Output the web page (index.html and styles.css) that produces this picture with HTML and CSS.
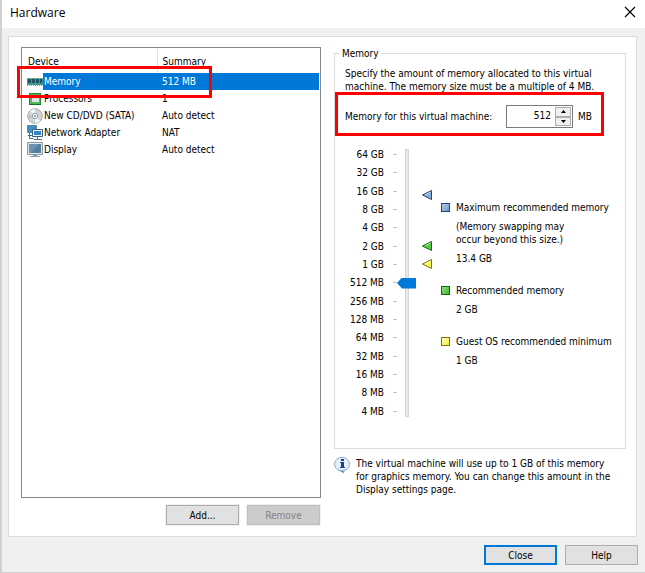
FILE: index.html
```html
<!DOCTYPE html>
<html lang="en">
<head>
<meta charset="utf-8">
<title>Hardware</title>
<link rel="stylesheet" href="styles.css">
</head>
<body>
<div class="window">
  <header class="titlebar">
    <h1>Hardware</h1>
    <button class="close-x" type="button" aria-label="Close window">
      <svg width="12" height="12" viewBox="0 0 12 12"><path d="M1 1l10 10M11 1L1 11" stroke="#000" stroke-width="1.2" fill="none"/></svg>
    </button>
  </header>

  <main class="panel">
    <section class="devices">
      <div class="list">
        <table>
          <thead><tr><th>Device</th><th>Summary</th></tr></thead>
          <tbody>
            <tr class="selected">
              <td><span class="device"><svg width="16" height="16" viewBox="0 0 16 16"><path d="M0 4h16v7H0z" fill="#3c9a94"/><path d="M1 5h3v4H1zM5 5h3v4H5zM9 5h3v4H9zM13 5h2v4h-2z" fill="#1f5563"/><path d="M0 11.500h16" stroke="#5cae93" stroke-dasharray="1 1"/><path d="M0 4.500h16" stroke="#67aaa2"/></svg><span class="name">Memory</span></span></td>
              <td class="value">512 MB</td>
            </tr>
            <tr>
              <td><span class="device"><svg width="16" height="16" viewBox="0 0 16 16"><path d="M2 2h12v12H2z" fill="#1f8f35"/><path d="M3 3h10v10H3z" fill="#4fb758"/><path d="M5 4h7v7H5z" fill="#e5e2e4"/><path d="M2 13.500h12" stroke="#12702b"/></svg><span class="name">Processors</span></span></td>
              <td class="value">1</td>
            </tr>
            <tr>
              <td><span class="device"><svg width="16" height="16" viewBox="0 0 16 16"><circle cx="8" cy="8" r="7.3" fill="#d2d5d9" stroke="#a5a9af"/><path d="M8 8L3 3a7 7 0 0 1 5-2zM8 8l5 5a7 7 0 0 1-5 2z" fill="#f5f6f7"/><path d="M8 8L1 7a7 7 0 0 0 1 4z" fill="#bfc4ca"/><circle cx="8" cy="8" r="2.7" fill="#f5f5f5" stroke="#999fa7"/><circle cx="8" cy="8" r="1" fill="#858b94"/></svg><span class="name">New CD/DVD (SATA)</span></span></td>
              <td class="value">Auto detect</td>
            </tr>
            <tr>
              <td><span class="device"><svg width="16" height="16" viewBox="0 0 16 16"><path d="M.5.500h9v7h-9z" fill="#3d8fc0" stroke="#5d87a5"/><path d="M2.500 8v5.500h4M1 10.500h4" fill="none" stroke="#2d6f9c"/><path d="M5.500 4.500h10v7h-10z" fill="#e6f2f9" stroke="#3b5f7c"/><path d="M7 6h7v4H7z" fill="#2f86c4"/><path d="M10.500 12v2M7 14.500h8" stroke="#4d7089"/></svg><span class="name">Network Adapter</span></span></td>
              <td class="value">NAT</td>
            </tr>
            <tr>
              <td><span class="device"><svg width="16" height="16" viewBox="0 0 16 16"><path d="M.5.5h15v12H.5z" fill="#dce6ec" stroke="#8798a5"/><path d="M2 2h12v9H2z" fill="#557f9f"/><path d="M2 2h10L4 11H2z" fill="#6c93b0"/><path d="M6 13h4v1h3v1H3v-1h3z" fill="#8d9ba5"/></svg><span class="name">Display</span></span></td>
              <td class="value">Auto detect</td>
            </tr>
          </tbody>
        </table>
        <span class="highlight highlight-device"></span>
      </div>
      <div class="list-actions">
        <button class="btn" type="button">Add...</button>
        <button class="btn" type="button" disabled>Remove</button>
      </div>
    </section>

    <section class="settings">
      <fieldset>
        <legend>Memory</legend>
        <p class="intro">Specify the amount of memory allocated to this virtual<br>machine. The memory size must be a multiple of 4 MB.</p>
        <div class="amount">
          <label for="memory">Memory for this virtual machine:</label>
          <span class="spinner">
            <input id="memory" type="text" value="512">
            <span class="steps">
              <button type="button" aria-label="Increase"><svg width="5" height="3" viewBox="0 0 5 3"><path d="M0 3L2.500 0 5 3z"/></svg></button>
              <button type="button" aria-label="Decrease"><svg width="5" height="3" viewBox="0 0 5 3"><path d="M0 0L2.500 3 5 0z"/></svg></button>
            </span>
          </span>
          <span>MB</span>
          <span class="highlight highlight-amount"></span>
        </div>
        <div class="allocation">
          <ol class="scale">
            <li>64 GB</li><li>32 GB</li><li>16 GB</li><li>8 GB</li><li>4 GB</li><li>2 GB</li><li>1 GB</li><li>512 MB</li><li>256 MB</li><li>128 MB</li><li>64 MB</li><li>32 MB</li><li>16 MB</li><li>8 MB</li><li>4 MB</li>
          </ol>
          <input class="slider" type="range" min="0" max="14" value="7" aria-label="Memory size">
          <div class="markers">
            <svg class="marker marker-max" width="10" height="10" viewBox="0 0 10 10"><path d="M9.500.5v9L.5 5z" fill="#8bafdc" stroke="#234574"/><path d="M8.500 2L3 5" stroke="#c6daf2"/></svg>
            <svg class="marker marker-rec" width="10" height="10" viewBox="0 0 10 10"><path d="M9.500.5v9L.5 5z" fill="#57cb42" stroke="#116b16"/><path d="M8.500 2L3 5" stroke="#b0eda0"/></svg>
            <svg class="marker marker-min" width="10" height="10" viewBox="0 0 10 10"><path d="M9.500.5v9L.5 5z" fill="#fbf64c" stroke="#77740b"/><path d="M8.500 2L3 5" stroke="#ffffc0"/></svg>
          </div>
          <dl class="legend">
            <div>
              <dt class="max">Maximum recommended memory</dt>
              <dd>(Memory swapping may<br>occur beyond this size.)</dd>
              <dd>13.4 GB</dd>
            </div>
            <div>
              <dt class="rec">Recommended memory</dt>
              <dd>2 GB</dd>
            </div>
            <div>
              <dt class="min">Guest OS recommended minimum</dt>
              <dd>1 GB</dd>
            </div>
          </dl>
        </div>
      </fieldset>
      <div class="note">
        <svg width="16" height="17" viewBox="0 0 16 17"><path d="M8 .5c4.300 0 7.500 2.900 7.500 6.700 0 3.300-2.200 5.400-5 6.200L9.500 16 6 13.500C2.800 12.800.5 10.500.5 7.200.5 3.400 3.700.5 8 .5z" fill="#e4eff9" stroke="#8caecb"/><path d="M4 12.500c3 1.700 7 1.300 9.500-1L10 13.300 9.300 15.500z" fill="#5289bb"/><path d="M7 2h3v2H7zM6 5h4v5h1v1H6v-1h1V6H6z" fill="#15428b"/></svg>
        <p>The virtual machine will use up to 1 GB of this memory<br>for graphics memory. You can change this amount in the<br>Display settings page.</p>
      </div>
    </section>
  </main>

  <footer class="dialog-actions">
    <button class="btn default" type="button">Close</button>
    <button class="btn" type="button">Help</button>
  </footer>
</div>
</body>
</html>
```
FILE: styles.css
```css
*, ::before, ::after { box-sizing: border-box; }

body {
  margin: 0;
  color: #000;
  font: 10px/13px "DejaVu Sans Condensed", Tahoma, sans-serif;
}

h1, p, dl, dd, ol { margin: 0; padding: 0; }
button, input { font: inherit; color: inherit; }
svg { display: block; flex: none; }

.window {
  display: flex;
  flex-direction: column;
  min-height: 100vh;
  border-left: 2px solid #d0d0d0;
  border-bottom: 1px solid #d0d0d0;
  background: #f0f0f0;
}

.titlebar {
  display: flex;
  align-items: center;
  justify-content: space-between;
  height: 28px;
  padding: 0 8px;
  background: #fff;
}
.titlebar h1 { font: 12px/16px "Open Sans", sans-serif; padding-bottom: 3px; }
.close-x {
  padding: 1px;
  border: 0;
  background: none;
  margin-bottom: 4px;
}

.panel {
  flex: 1;
  display: grid;
  grid-template-columns: minmax(0, 300fr) minmax(0, 292fr);
  gap: 13px;
  margin: 8px 8px 0 6px;
  padding: 10px 10px 11px 12px;
  border: 1px solid #dcdcdc;
  background: #fff;
}

.devices { display: flex; flex-direction: column; }
.list {
  position: relative;
  flex: 1;
  padding: 1px;
  border: 1px solid #828790;
}
table { width: 100%; border-collapse: collapse; table-layout: fixed; }
th, td { padding: 0; text-align: left; font-weight: normal; white-space: nowrap; }
th { height: 24px; padding: 0 5px; }
th:first-child { width: 134px; border-right: 1px solid #e0e0e0; }
td { height: 17px; }
.device { display: flex; align-items: center; padding-left: 4px; }
.name { flex: 1; line-height: 17px; padding-left: 1px; }
.value { padding-left: 5px; }
.selected .name, .selected .value { background: #0078d7; color: #fff; }

.highlight {
  position: absolute;
  border: 3px solid #f00;
  pointer-events: none;
}
.highlight-device { left: -5px; top: 18px; width: 195px; height: 32px; }
.highlight-amount { left: -10px; right: 11px; top: -13px; bottom: -8px; }

.list-actions, .dialog-actions { display: flex; justify-content: flex-end; gap: 8px; }
.list-actions { padding: 7px 1px 0 0; }
.dialog-actions { padding: 8px 7px 7px; }
.btn {
  width: 73px;
  height: 20px;
  padding: 0;
  border: 1px solid #adadad;
  background: #e1e1e1;
}
.list-actions .btn { outline: 1px solid #f0f0f0; }
.btn:disabled { border-color: #bfbfbf; background: #ccc; color: #838383; }
.btn.default { border: 2px solid #0078d7; }

fieldset {
  min-width: 0;
  margin: 0;
  padding: 7px 10px 31px;
  border: 1px solid #dcdcdc;
}
legend { margin-left: -5px; padding: 0 2px; }
.intro { white-space: nowrap; }

.amount {
  position: relative;
  display: flex;
  align-items: center;
  gap: 5px;
  margin: 12px 0 21px;
  white-space: nowrap;
}
.amount label { flex: none; width: 156px; }
.spinner {
  display: flex;
  width: 67px;
  height: 23px;
  padding: 1px;
  border: 1px solid #7a7a7a;
}
.spinner input {
  flex: 1;
  min-width: 0;
  padding: 0 4px 3px;
  border: 0;
  outline: 0;
  background: none;
  text-align: right;
}
.steps { display: flex; flex-direction: column; width: 16px; }
.steps button {
  flex: 1;
  display: flex;
  align-items: center;
  justify-content: center;
  padding: 0;
  border: 1px solid #adadad;
  background: #f0f0f0;
}

.allocation { display: flex; height: 268px; }
.scale {
  display: flex;
  flex-direction: column;
  justify-content: space-between;
  flex: none;
  width: 52px;
  list-style: none;
}
.scale li {
  display: flex;
  align-items: center;
  justify-content: flex-end;
  gap: 9px;
  height: 11px;
  line-height: 11px;
  white-space: nowrap;
}
.scale li::after { content: ""; width: 4px; height: 1px; background: #c4c4c4; }

.slider {
  appearance: none;
  writing-mode: vertical-lr;
  direction: rtl;
  flex: none;
  width: 19px;
  height: 100%;
  margin: 0;
  background: linear-gradient(#e7eaea, #e7eaea) 9px 1px / 2px calc(100% - 2px) no-repeat,
    linear-gradient(#d6d6d6, #d6d6d6) 8px 0 / 4px 100% no-repeat;
}
.slider::-webkit-slider-thumb {
  appearance: none;
  width: 19px;
  height: 11px;
  background: #0078d7;
  clip-path: polygon(0 50%, 5px 0, 100% 0, 100% 100%, 5px 100%);
}

.markers { position: relative; flex: none; width: 25px; margin-top: 1px; }
.marker { position: absolute; right: 9px; }
.marker-max { top: 15%; }
.marker-rec { top: 34%; }
.marker-min { top: 41%; }

.legend { padding-top: 52px; white-space: nowrap; }
.legend > div { display: grid; gap: 6px; margin-bottom: 19px; }
.legend dt { display: flex; align-items: center; gap: 6px; }
.legend dt::before { content: ""; width: 9px; height: 9px; border: 1px solid; }
.legend dd { padding-left: 15px; }
.legend .max::before { border-color: #234574; background: linear-gradient(135deg, #b6cdeb, #7198cb); }
.legend .rec::before { border-color: #116b16; background: linear-gradient(135deg, #9be187, #37b52b); }
.legend .min::before { border-color: #77740b; background: linear-gradient(135deg, #ffffc8, #f5ef2c); }

.note { display: flex; gap: 6px; margin-top: 8px; white-space: nowrap; }
```
